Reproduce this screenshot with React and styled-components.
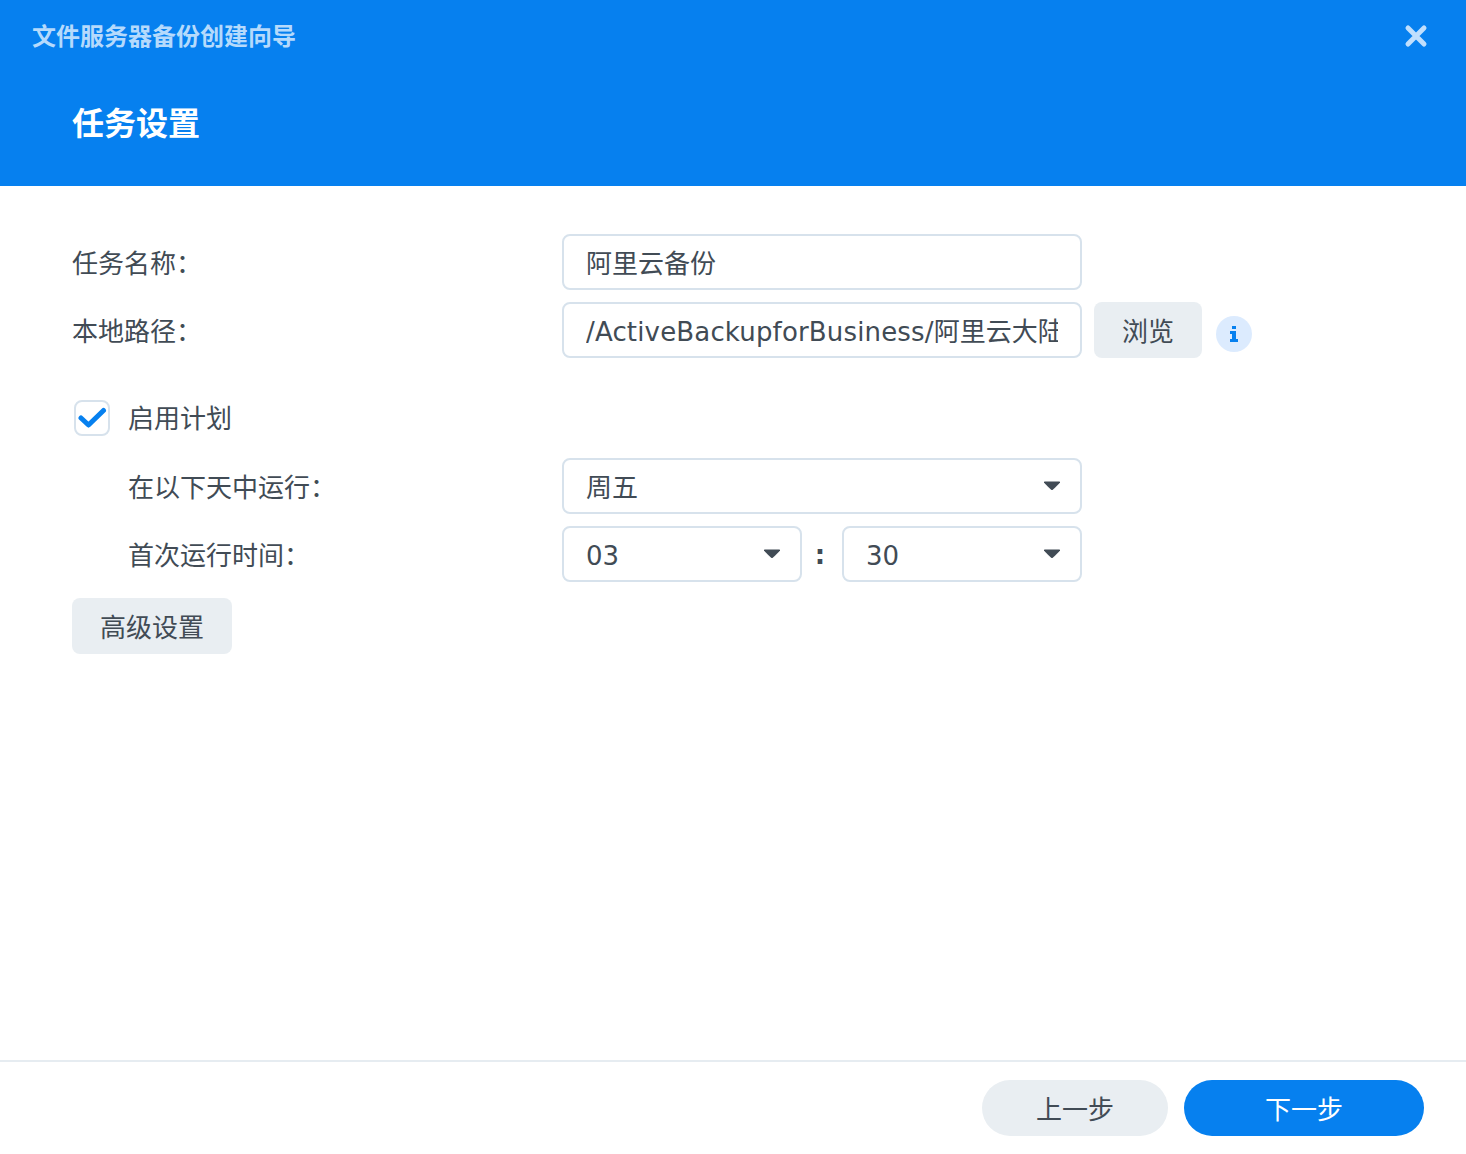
import React from "react";
import styled, { createGlobalStyle } from "styled-components";

const Global = createGlobalStyle`
  html, body { margin: 0; padding: 0; background: #fff; }
  * { box-sizing: border-box; }
`;
const Dialog = styled.div`
  width: 1466px; height: 1154px; display: flex; flex-direction: column;
  font-family: "DejaVu Sans", "Noto Sans CJK SC", sans-serif; font-size: 26px; color: #414b55;
`;
const Header = styled.header`
  height: 186px; background: #0680ef; display: flex; flex-direction: column; flex: none;
`;
const TitleBar = styled.div`
  height: 72px; padding: 0 38px 0 32px; display: flex; align-items: center; justify-content: space-between;
`;
const WindowTitle = styled.div`
  font-size: 24px; font-weight: 700; color: #b5dafc; line-height: 70px; padding-top: 2px;
`;
const Close = styled.svg`
  width: 24px; height: 24px; display: block;
`;
const Heading = styled.h1`
  margin: 29px 0 0 72px; font-size: 32px; font-weight: 700; color: #fff; line-height: 46px;
`;
const Body = styled.main`
  flex: 1; padding: 48px 72px 0; display: flex; flex-direction: column; gap: 12px;
`;
const Row = styled.div`
  display: flex; align-items: center; height: 56px;
  margin-top: ${p => p.$top || 0}px;
`;
const Label = styled.div`
  width: ${p => (p.$indent ? 434 : 490)}px; margin-left: ${p => (p.$indent ? 56 : 0)}px; flex: none;
  line-height: 52px; padding-top: 4px;
`;
const Field = styled.div`
  width: ${p => p.$w || 520}px; height: 56px; border: 2px solid #d7e2ec; border-radius: 8px;
  padding: 0 22px; display: flex; align-items: center; justify-content: space-between; flex: none;
  background: #fff; overflow: hidden; white-space: nowrap;
`;
const FieldText = styled.span`
  display: block; flex: 1; min-width: 0; overflow: hidden;
  padding-top: ${p => (p.$digits ? 3 : 0)}px;
  padding-bottom: ${p => (p.$digits ? 0 : 2)}px;
`;
const PathLatin = styled.span`
  letter-spacing: 0.16px;
`;
const Caret = styled.svg`
  width: 18px; height: 10px; flex: none; position: relative; left: 3px;
`;
const Button = styled.button`
  height: 56px; width: ${p => p.$w}px; border: 0; border-radius: 8px; background: #e9eef2;
  font: inherit; color: inherit; padding: 0 0 2px; margin-left: ${p => p.$left || 0}px; flex: none;
`;
const InfoBadge = styled.span`
  width: 36px; height: 36px; border-radius: 50%; background: #dcebfe; margin-left: 14px; flex: none;
  display: flex; align-items: center; justify-content: center; position: relative; top: 4px;
`;
const Check = styled.span`
  width: 36px; height: 36px; margin-left: 2px; border: 2px solid #d7e2ec; border-radius: 8px; flex: none;
  display: flex; align-items: center; justify-content: center;
`;
const CheckLabel = styled.span`
  margin-left: 18px; padding-bottom: 3px;
`;
const Colon = styled.span`
  width: 36px; margin-right: 4px; text-align: center; flex: none; font-weight: 700; padding-top: 2px;
`;
const Footer = styled.footer`
  height: 94px; flex: none; border-top: 2px solid #e6ecf1; padding: 18px 42px 0 0;
  display: flex; justify-content: flex-end; gap: 16px;
`;
const Pill = styled.button`
  height: 56px; width: ${p => p.$w}px; border: 0; border-radius: 28px; padding: 0 0 2px; font: inherit;
  background: ${p => (p.$primary ? "#0680ef" : "#e9eef2")};
  color: ${p => (p.$primary ? "#fff" : "#414b55")};
`;

const CaretIcon = () => (
  <Caret viewBox="0 0 18 10"><path d="M1 1.5Q0.5 0.5 2 0.5H16Q17.5 0.5 17 1.5Q16 3 9.8 8.8Q9 9.4 8.2 8.8Q2 3 1 1.5Z" fill="#414b55" /></Caret>
);
const Select = ({ w, digits, children }) => (
  <Field $w={w}><FieldText $digits={digits}>{children}</FieldText><CaretIcon /></Field>
);

export default function App() {
  return (
    <Dialog>
      <Global />
      <Header>
        <TitleBar>
          <WindowTitle>文件服务器备份创建向导</WindowTitle>
          <Close viewBox="0 0 24 24"><path d="M4 4L20 20M20 4L4 20" stroke="#c0dffd" strokeWidth="5" strokeLinecap="round" /></Close>
        </TitleBar>
        <Heading>任务设置</Heading>
      </Header>
      <Body>
        <Row>
          <Label>任务名称：</Label>
          <Field><FieldText>阿里云备份</FieldText></Field>
        </Row>
        <Row>
          <Label>本地路径：</Label>
          <Field><FieldText><PathLatin>/ActiveBackupforBusiness/</PathLatin>阿里云大陆</FieldText></Field>
          <Button $w={108} $left={12}>浏览</Button>
          <InfoBadge>
            <svg width="10" height="16" viewBox="0 0 10 16"><path d="M3 0H7V3H3ZM1 5H7V13H9V16H1V13H3V8H1Z" fill="#0680ef" /></svg>
          </InfoBadge>
        </Row>
        <Row $top={20}>
          <Check>
            <svg width="30" height="24" viewBox="0 0 30 24"><path d="M4 12L11.5 19L26.5 4.5" fill="none" stroke="#0680ef" strokeWidth="5" strokeLinecap="round" strokeLinejoin="round" /></svg>
          </Check>
          <CheckLabel>启用计划</CheckLabel>
        </Row>
        <Row>
          <Label $indent>在以下天中运行：</Label>
          <Select>周五</Select>
        </Row>
        <Row>
          <Label $indent>首次运行时间：</Label>
          <Select w={240} digits>03</Select>
          <Colon>:</Colon>
          <Select w={240} digits>30</Select>
        </Row>
        <Row $top={4}>
          <Button $w={160}>高级设置</Button>
        </Row>
      </Body>
      <Footer>
        <Pill $w={186}>上一步</Pill>
        <Pill $w={240} $primary>下一步</Pill>
      </Footer>
    </Dialog>
  );
}
